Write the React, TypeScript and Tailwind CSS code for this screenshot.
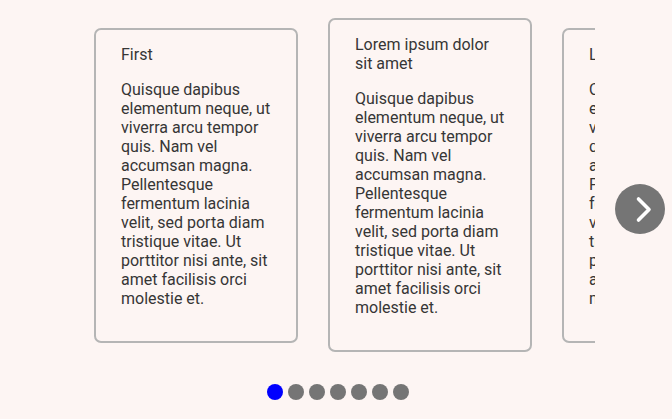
import React from "react";

const body =
  "Quisque dapibus elementum neque, ut viverra arcu tempor quis. Nam vel accumsan magna. Pellentesque fermentum lacinia velit, sed porta diam tristique vitae. Ut porttitor nisi ante, sit amet facilisis orci molestie et.";

const slides = ["First", "Lorem ipsum dolor sit amet", "Lorem ipsum", "Fourth", "Fifth", "Sixth", "Seventh"];

function Card({ title }: { title: string }) {
  return (
    <div className="w-[204px] shrink-0 rounded-[7px] border-2 border-[#b5b5b5] bg-[#fdf5f3] pl-[25px] pr-[23px] pt-[15px] pb-[33px] text-[16px] leading-[19px] text-[#363636]">
      <div className="mb-[16px]">{title}</div>
      <p>{body}</p>
    </div>
  );
}

export default function App() {
  return (
    <div
      className="flex h-[419px] w-[672px] items-center bg-[#fdf5f3] pt-[18px] pb-[19px]"
      style={{ fontFamily: "Roboto, 'Liberation Sans', sans-serif" }}
    >
      <div className="w-[77px] shrink-0" />
      <div className="flex w-[518px] shrink-0 flex-col">
        <div className="flex h-[334px] items-center gap-[30px] overflow-hidden pl-[17px]">
          {slides.map((s, i) => (
            <Card key={i} title={s} />
          ))}
        </div>
        <div className="mt-[32px] flex justify-center gap-[5px] pl-[4px]">
          {slides.map((_, i) => (
            <span
              key={i}
              className={`h-[16px] w-[16px] rounded-full ${i === 0 ? "bg-[#0000ff]" : "bg-[#757575]"}`}
            />
          ))}
        </div>
      </div>
      <button className="ml-[20px] flex h-[50px] w-[50px] shrink-0 items-center justify-center rounded-full bg-[#757575]">
        <svg width="50" height="50" viewBox="0 0 50 50">
          <path d="M23.5 15 L34 25.5 L23.5 36" fill="none" stroke="#fff" strokeWidth="3.6" strokeLinecap="round" strokeLinejoin="round" />
        </svg>
      </button>
    </div>
  );
}
